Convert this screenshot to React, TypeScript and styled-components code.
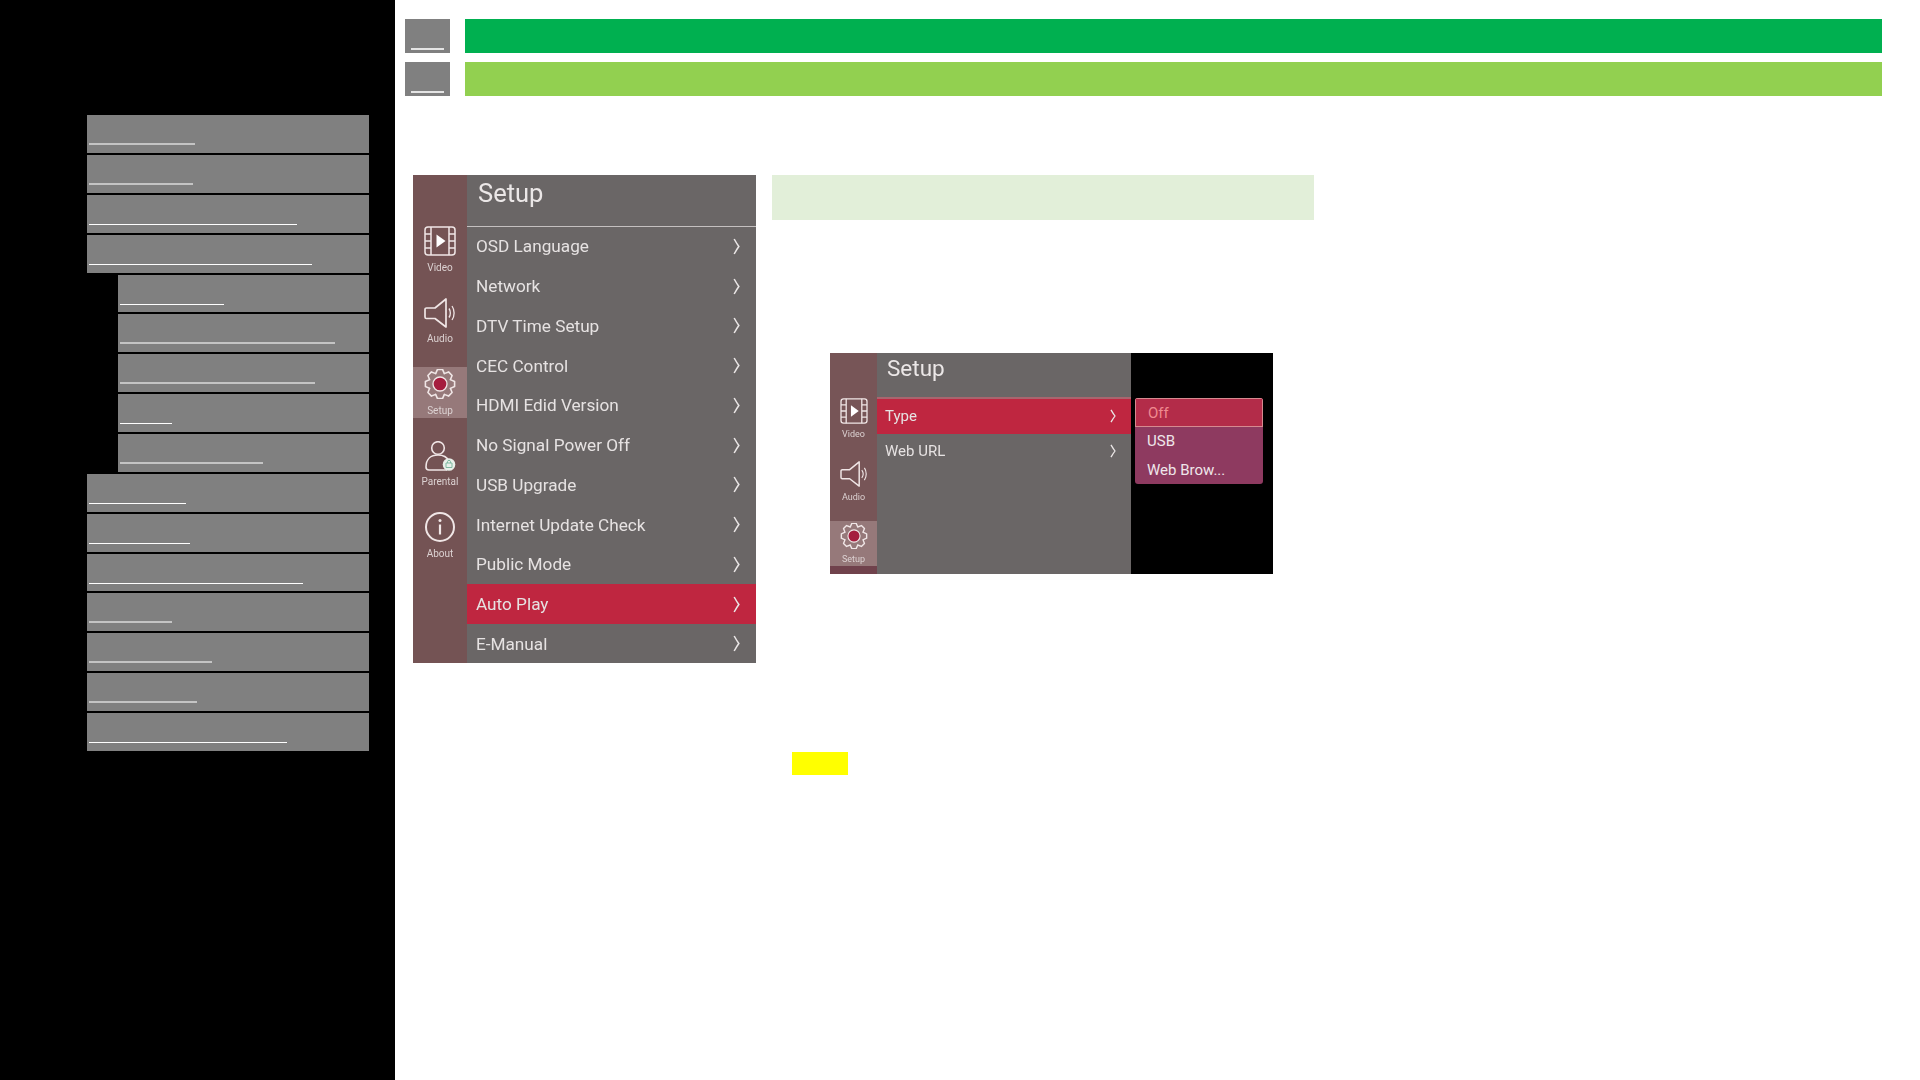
import React from 'react'
import styled, { createGlobalStyle } from 'styled-components'

const GlobalStyle = createGlobalStyle`
  html, body {
    margin: 0;
    padding: 0;
    background: #fff;
    font-family: Roboto, "Liberation Sans", sans-serif;
  }
`

const Page = styled.div`
  display: flex;
  width: 1920px;
  height: 1080px;
  overflow: hidden;
`

const Sidebar = styled.nav`
  width: 395px;
  flex: none;
  box-sizing: border-box;
  padding: 115px 26px 0 87px;
  background: #000;
  display: flex;
  flex-direction: column;
  gap: 2px;
`

const NavRow = styled.a<{ $sub?: boolean; $short?: boolean }>`
  display: block;
  flex: none;
  height: ${p => (p.$short ? '37px' : '38px')};
  box-sizing: border-box;
  margin-left: ${p => (p.$sub ? '31px' : '0')};
  padding: 28px 0 0 2px;
  background: #808080;
`

const NavLine = styled.span<{ $soft?: boolean }>`
  display: block;
  height: ${p => (p.$soft ? '2px' : '1px')};
  margin-top: ${p => (p.$soft ? '0' : '1px')};
  background: ${p => (p.$soft ? '#c4c4c4' : '#fff')};
`

const Main = styled.main`
  flex: 1;
  padding: 19px 38px 0 10px;
  display: flex;
  flex-direction: column;
`

const HeadRow = styled.div`
  display: flex;
  gap: 15px;
  height: 34px;
  margin-bottom: 9px;
`

const HeadTag = styled.div`
  width: 45px;
  flex: none;
  box-sizing: border-box;
  padding: 29px 6px 0;
  background: #808080;
`

const HeadTagLine = styled.div`
  height: 2px;
  background: #e4e4e4;
`

const HeadBar = styled.div<{ $color: string }>`
  flex: 1;
  background: ${p => p.$color};
`

const Content = styled.div`
  display: flex;
  align-items: flex-start;
  gap: 16px;
  margin: 70px 0 0 8px;
`

const RightColumn = styled.div`
  width: 542px;
  display: flex;
  flex-direction: column;
`

const Notice = styled.div`
  height: 45px;
  background: #e2efd9;
`

const Figure = styled.div`
  display: flex;
  width: 443px;
  height: 221px;
  margin: 133px 0 0 58px;
`

const Marker = styled.div`
  width: 56px;
  height: 23px;
  margin: 178px 0 0 20px;
  background: #ff0;
`

const Screen = styled.div<{ $small?: boolean }>`
  display: flex;
  flex: none;
  width: ${p => (p.$small ? '301px' : '343px')};
  height: ${p => (p.$small ? '221px' : '488px')};
  overflow: hidden;
  filter: blur(0.3px);
`

const Rail = styled.div<{ $small?: boolean }>`
  width: ${p => (p.$small ? '47px' : '54px')};
  flex: none;
  box-sizing: border-box;
  padding-top: ${p => (p.$small ? '43px' : '49px')};
  display: flex;
  flex-direction: column;
  gap: ${p => (p.$small ? '17.5px' : '20.5px')};
  background: ${p =>
    p.$small ? 'linear-gradient(#775557 0, #775557 213px, #70424c 213px)' : '#745354'};
`

const RailItem = styled.div<{ $small?: boolean; $active?: boolean }>`
  height: ${p => (p.$small ? '45px' : '51px')};
  flex: none;
  box-sizing: border-box;
  padding-top: 2px;
  display: flex;
  flex-direction: column;
  align-items: center;
  background: ${p => (p.$active ? '#96797a' : 'transparent')};

  svg {
    display: block;
    flex: none;
    width: ${p => (p.$small ? '28px' : '32px')};
    height: ${p => (p.$small ? '26px' : '30px')};
  }
`

const RailLabel = styled.span<{ $small?: boolean }>`
  margin-top: ${p => (p.$small ? '4px' : '5.5px')};
  font-size: ${p => (p.$small ? '9px' : '10px')};
  line-height: 12px;
  color: #dcd2d2;
`

const Panel = styled.div`
  flex: 1;
  min-width: 0;
  background: #6a6666;
`

const PanelHead = styled.div<{ $small?: boolean }>`
  box-sizing: border-box;
  height: ${p => (p.$small ? '44px' : '51.5px')};
  padding-left: ${p => (p.$small ? '10px' : '11px')};
  font-size: ${p => (p.$small ? '22.5px' : '25.5px')};
  line-height: ${p => (p.$small ? '30px' : '36px')};
  color: #ebe7e7;
  border-bottom: ${p => (p.$small ? '0' : '1px solid #c4c0c0')};
`

const MenuRow = styled.div<{ $small?: boolean; $active?: boolean; $rule?: boolean }>`
  display: flex;
  align-items: center;
  justify-content: space-between;
  height: ${p => (p.$small ? '33px' : '39.75px')};
  padding: ${p => (p.$small ? '0 15px 2px 8px' : '0 16px 0 9px')};
  font-size: ${p => (p.$small ? '15px' : '17.2px')};
  color: #e6e2e2;
  background: ${p => (p.$active ? '#bf2640' : 'transparent')};
  border-top: ${p => (p.$rule ? '2px solid #a8656e' : '0')};
`

const Chevron = styled.svg<{ $small?: boolean }>`
  flex: none;
  width: ${p => (p.$small ? '6px' : '7px')};
  height: ${p => (p.$small ? '14px' : '17px')};
`

const BlackPane = styled.div`
  flex: 1;
  box-sizing: border-box;
  padding: 45px 10px 0 4px;
  background: #000;
`

const Dropdown = styled.div`
  border-radius: 3px;
  overflow: hidden;
  background: #8e3a60;
`

const DropItem = styled.div<{ $selected?: boolean }>`
  box-sizing: border-box;
  height: ${p => (p.$selected ? '29px' : '28.5px')};
  display: flex;
  align-items: center;
  padding-left: 12px;
  font-size: 15px;
  color: ${p => (p.$selected ? '#ef8a90' : '#eee6ea')};
  background: ${p => (p.$selected ? '#b32c49' : 'transparent')};
  border: ${p => (p.$selected ? '1px solid #d68a90' : '0')};
`

const ink = '#f0e6e6'

const gearPath = (() => {
  const points: string[] = []
  for (let i = 0; i < 8; i++) {
    const a = (i * Math.PI) / 4 - Math.PI / 2
    const spots: [number, number][] = [
      [-0.4, 11.2],
      [-0.17, 14.8],
      [0.17, 14.8],
      [0.4, 11.2],
    ]
    spots.forEach(([off, r]) => {
      points.push(`${(16 + r * Math.cos(a + off)).toFixed(2)} ${(15 + r * Math.sin(a + off)).toFixed(2)}`)
    })
  }
  return `M${points.join('L')}Z`
})()

const VideoIcon = () => (
  <svg viewBox="0 0 32 30" fill="none" stroke={ink} strokeWidth="1.5">
    <rect x="1" y="1" width="30" height="28" rx="3" />
    <path d="M7 1V29M25 1V29M1 8H7M1 15H7M1 22H7M25 8H31M25 15H31M25 22H31" />
    <path d="M12.5 8.5L21.5 15L12.5 21.5Z" fill="#fff" stroke="none" />
  </svg>
)

const AudioIcon = () => (
  <svg viewBox="0 0 32 30" fill="none" stroke={ink} strokeWidth="1.7" strokeLinejoin="round">
    <path d="M2.500 10H11L22 1V29L11 20.500H2.500A1.500 1.500 0 0 1 1 19V11.500A1.500 1.500 0 0 1 2.500 10Z" />
    <path d="M25 10.500C26.800 13 26.800 17 25 19.500M28 8C30.800 12 30.800 18 28 22" strokeWidth="1.300" />
  </svg>
)

const GearIcon = () => (
  <svg viewBox="0 0 32 30" fill="none" stroke={ink} strokeWidth="1.600" strokeLinejoin="round">
    <path d={gearPath} />
    <circle cx="16" cy="15" r="7" fill="#a51d3e" stroke={ink} strokeWidth="1.300" />
  </svg>
)

const ParentalIcon = () => (
  <svg viewBox="0 0 32 30" fill="none" stroke={ink} strokeWidth="1.600">
    <circle cx="14" cy="7" r="6.300" />
    <path d="M23 29H5C3 29 2 28 2 26C2 18 7 14 14 14C19 14 23 16 25 20" />
    <circle cx="25" cy="23.500" r="6.300" fill="#e8efe8" stroke="none" />
    <path d="M22 22H28V26.500H22ZM23.500 22V20.500C23.500 19 26.500 19 26.500 20.500V22" stroke="#7fb8a0" strokeWidth="1" />
  </svg>
)

const AboutIcon = () => (
  <svg viewBox="0 0 32 30" fill="none" stroke={ink} strokeWidth="2">
    <circle cx="16" cy="15" r="14" />
    <path d="M16 12.500V22.500" strokeWidth="2.200" />
    <circle cx="16" cy="8.500" r="1.500" fill={ink} stroke="none" />
  </svg>
)

const Arrow = ({ small }: { small?: boolean }) => (
  <Chevron $small={small} viewBox="0 0 6 16" fill="none" stroke="#eae6e6" strokeWidth="1.300" preserveAspectRatio="none">
    <path d="M1 1C3 5 4 6.500 5 8C4 9.500 3 11 1 15" />
  </Chevron>
)

const navRows = [
  { width: 106, soft: true },
  { width: 104, soft: true },
  { width: 208 },
  { width: 223 },
  { width: 104, sub: true, short: true },
  { width: 215, sub: true, soft: true },
  { width: 195, sub: true, soft: true },
  { width: 52, sub: true },
  { width: 143, sub: true, soft: true },
  { width: 97 },
  { width: 101 },
  { width: 214, short: true },
  { width: 83, soft: true },
  { width: 123, soft: true },
  { width: 108, soft: true },
  { width: 198 },
]

const setupItems = [
  'OSD Language',
  'Network',
  'DTV Time Setup',
  'CEC Control',
  'HDMI Edid Version',
  'No Signal Power Off',
  'USB Upgrade',
  'Internet Update Check',
  'Public Mode',
  'Auto Play',
  'E-Manual',
]

const railItems = [
  { label: 'Video', icon: <VideoIcon /> },
  { label: 'Audio', icon: <AudioIcon /> },
  { label: 'Setup', icon: <GearIcon />, active: true },
  { label: 'Parental', icon: <ParentalIcon /> },
  { label: 'About', icon: <AboutIcon /> },
]

const SetupRail = ({ small }: { small?: boolean }) => (
  <Rail $small={small}>
    {railItems.slice(0, small ? 3 : 5).map(item => (
      <RailItem key={item.label} $small={small} $active={item.active}>
        {item.icon}
        <RailLabel $small={small}>{item.label}</RailLabel>
      </RailItem>
    ))}
  </Rail>
)

const App = () => (
  <Page>
    <GlobalStyle />
    <Sidebar>
      {navRows.map((row, i) => (
        <NavRow key={i} $sub={row.sub} $short={row.short}>
          <NavLine $soft={row.soft} style={{ width: row.width }} />
        </NavRow>
      ))}
    </Sidebar>
    <Main>
      <HeadRow>
        <HeadTag><HeadTagLine /></HeadTag>
        <HeadBar $color="#00b050" />
      </HeadRow>
      <HeadRow>
        <HeadTag><HeadTagLine /></HeadTag>
        <HeadBar $color="#92d050" />
      </HeadRow>
      <Content>
        <Screen>
          <SetupRail />
          <Panel>
            <PanelHead>Setup</PanelHead>
            {setupItems.map(item => (
              <MenuRow key={item} $active={item === 'Auto Play'}>
                {item}
                <Arrow />
              </MenuRow>
            ))}
          </Panel>
        </Screen>
        <RightColumn>
          <Notice />
          <Figure>
            <Screen $small>
              <SetupRail small />
              <Panel>
                <PanelHead $small>Setup</PanelHead>
                <MenuRow $small $active $rule>Type<Arrow small /></MenuRow>
                <MenuRow $small>Web URL<Arrow small /></MenuRow>
              </Panel>
            </Screen>
            <BlackPane>
              <Dropdown>
                <DropItem $selected>Off</DropItem>
                <DropItem>USB</DropItem>
                <DropItem>Web Brow...</DropItem>
              </Dropdown>
            </BlackPane>
          </Figure>
          <Marker />
        </RightColumn>
      </Content>
    </Main>
  </Page>
)

export default App
